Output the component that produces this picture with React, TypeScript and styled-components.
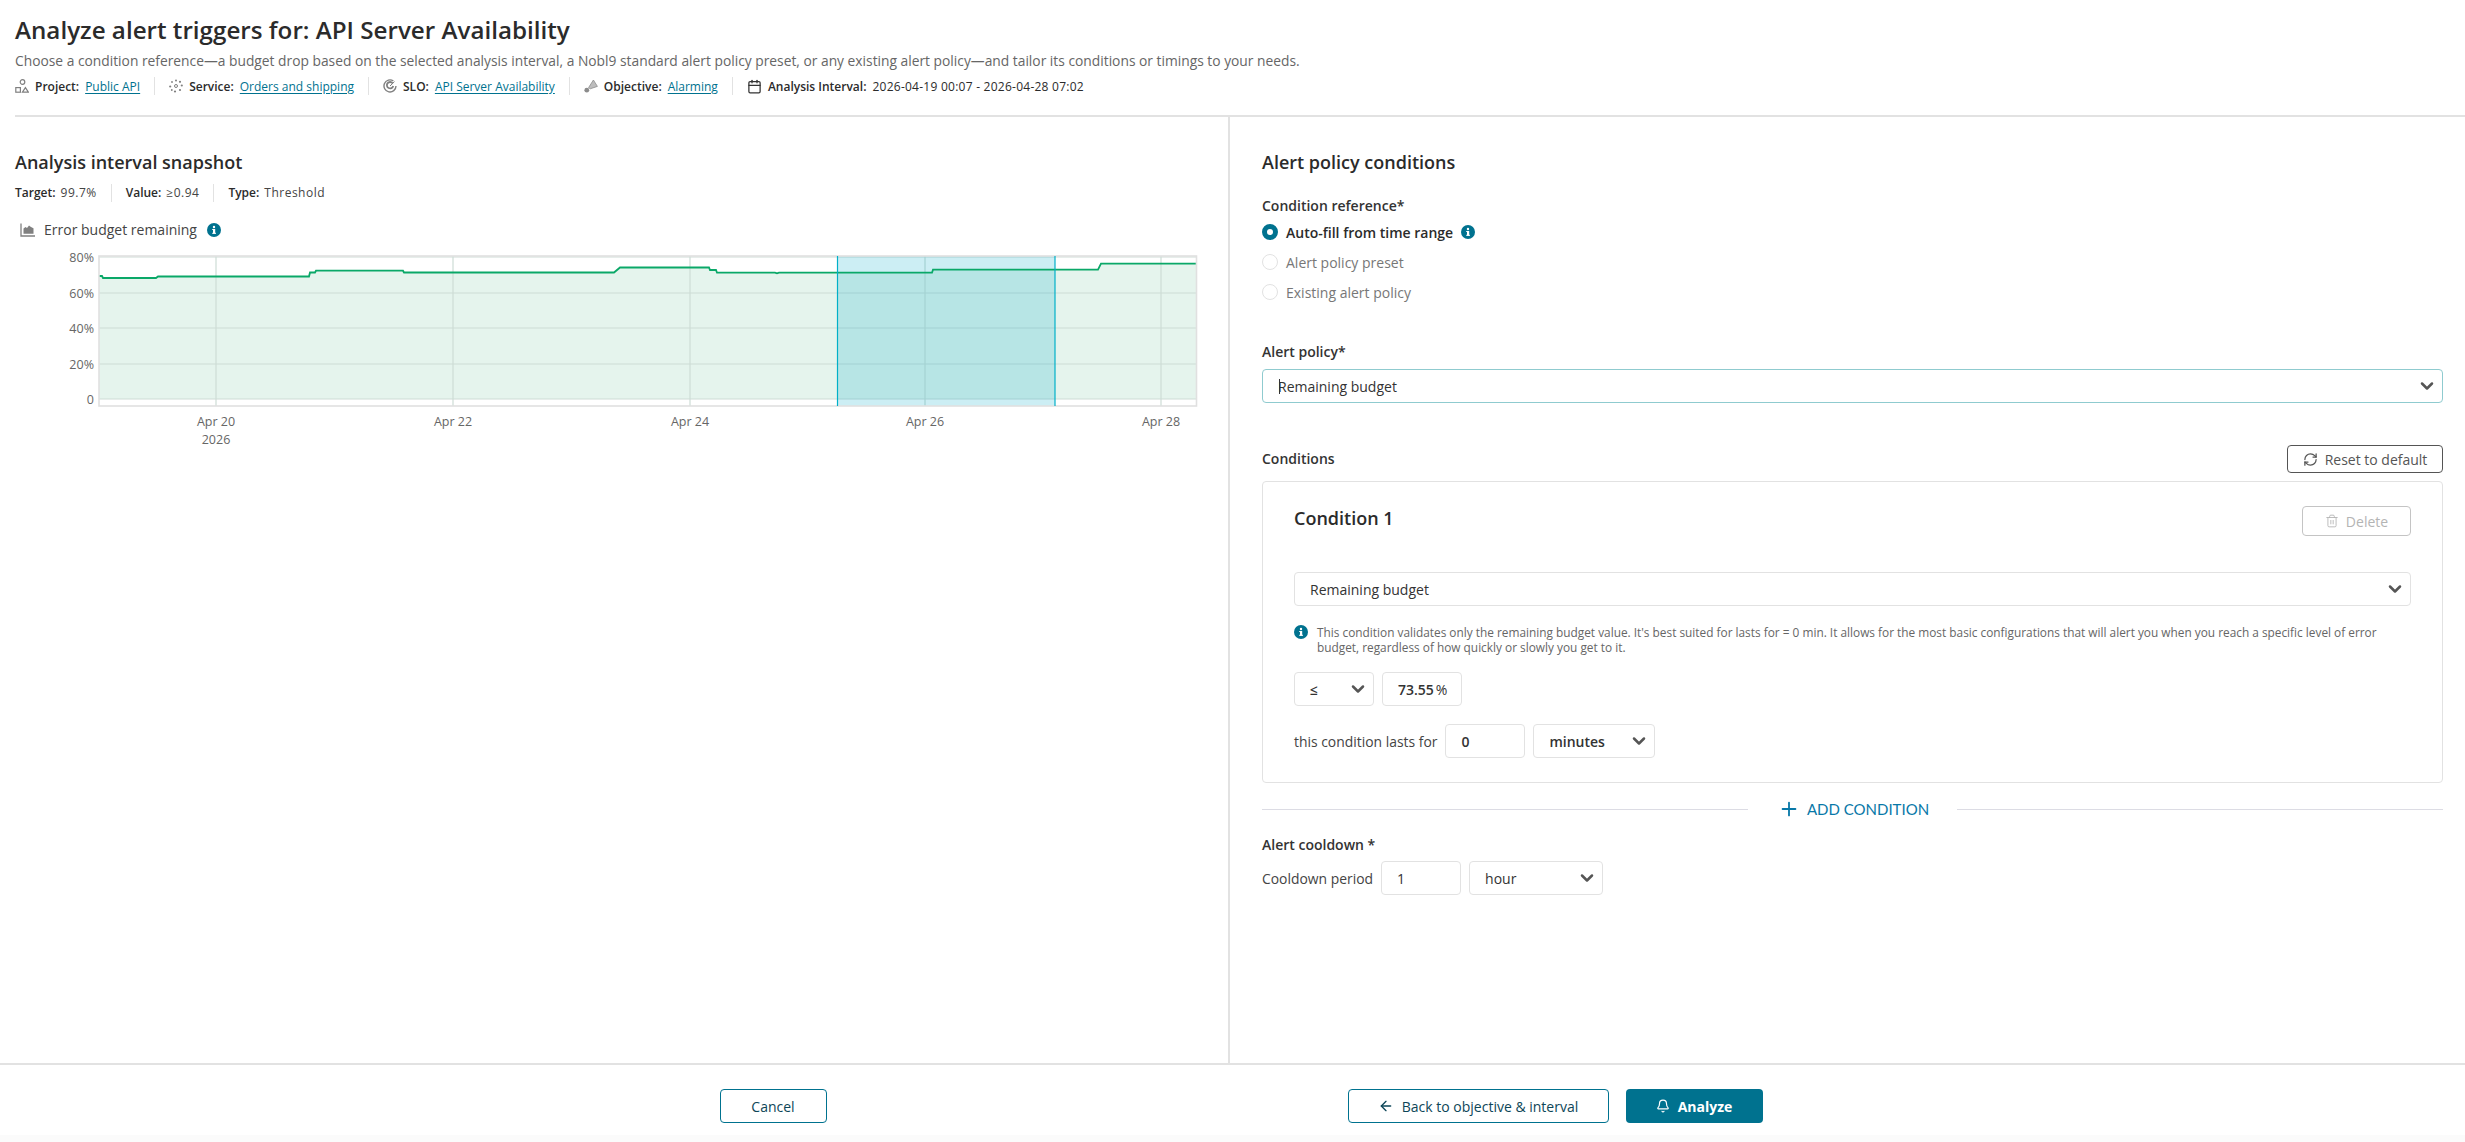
import React from 'react';
import styled, {createGlobalStyle} from 'styled-components';
import {ArrowLeft, Bell, Calendar, ChevronDown, Plus, RefreshCw, Trash2} from 'lucide-react';

const ink = '#2b2b2b';
const teal = '#00728f';
const line = '#e2e2e2';

const GlobalStyle = createGlobalStyle`
	html, body {
		margin: 0;
		padding: 0;
		background: #fff;
	}
	body {
		font-family: "Open Sans", "Noto Sans", "Liberation Sans", sans-serif;
		color: ${ink};
	}
	* {
		box-sizing: border-box;
	}
`;

const ProjectIcon = () => (
	<svg width="14" height="14" viewBox="0 0 14 14" fill="none" stroke="#808080" strokeWidth="1.2">
		<circle cx="7.5" cy="3" r="2.3" />
		<rect x="0.8" y="8.6" width="4.6" height="4.6" />
		<path d="M10.4 8.6 L13.4 13.2 L7.4 13.2 Z" />
	</svg>
);

const ServiceIcon = () => (
	<svg width="14" height="14" viewBox="0 0 14 14" fill="#808080">
		<circle cx="7" cy="7" r="1.5" fill="none" stroke="#808080" />
		<circle cx="7" cy="1.5" r="1" />
		<circle cx="6" cy="12.5" r="1.1" />
		<circle cx="1.2" cy="7.5" r="1.1" />
		<circle cx="12.8" cy="6.5" r="1.1" />
		<circle cx="3" cy="3" r="0.9" />
		<circle cx="11" cy="2.8" r="1.1" />
		<circle cx="2.8" cy="11" r="0.9" />
		<circle cx="11" cy="11" r="1.1" />
	</svg>
);

const SloIcon = () => (
	<svg width="14" height="14" viewBox="0 0 14 14" fill="none" stroke="#808080" strokeWidth="1.4">
		<path d="M10.4 2 A6 6 0 1 0 13 7" />
		<path d="M9.6 4.2 A3.2 3.2 0 1 0 10.2 7" strokeWidth="1.8" />
		<path d="M7 7 L11.5 2.6" strokeWidth="1" />
	</svg>
);

const ObjectiveIcon = () => (
	<svg width="14" height="14" viewBox="0 0 14 14" fill="#8c8c8c">
		<circle cx="2.8" cy="11.2" r="2.4" />
		<path d="M4.6 8.6 L9.4 1 L13.4 7.4 L6.2 9.8 Z" fill="#bdbdbd" stroke="#8c8c8c" strokeWidth="0.8" />
	</svg>
);

const ChartIcon = () => (
	<svg width="16" height="14" viewBox="0 0 16 14" fill="#808080">
		<path d="M1 0.5v12.5h14" fill="none" stroke="#808080" strokeWidth="1.3" />
		<path d="M3.5 10.8V5.5l2-1.6 1.5 1.2 2-2.6 2 1.6 2.5 1.2v5.5z" />
	</svg>
);

const InfoDot = () => (
	<InfoSvg width="14" height="14" viewBox="0 0 14 14">
		<circle cx="7" cy="7" r="7" fill={teal} />
		<rect x="6" y="6" width="2.2" height="4.6" fill="#fff" />
		<rect x="5.2" y="6" width="2" height="1" fill="#fff" />
		<rect x="5.2" y="9.8" width="3.8" height="1" fill="#fff" />
		<circle cx="7" cy="4" r="1.2" fill="#fff" />
	</InfoSvg>
);

const Chevron = () => <ChevronDown size={20} strokeWidth={3} color="#555" />;

const plot = {left: 99, right: 1196.5, top: 257, bottom: 407};
const gridY = [258, 294, 329, 365, 400];
const gridX = [216, 453, 690, 925, 1161];
const yLabels = ['80%', '60%', '40%', '20%', '0'];
const xLabels = ['Apr 20', 'Apr 22', 'Apr 24', 'Apr 26', 'Apr 28'];
const series = 'M99 277 L102 277 L103 279 L156 279 L158 277.5 L309 277.5 L310 273.5 L315 273.5 L316 271.7 L403 271.7 L404 273.5 L614 273.5 L620 268.5 L709 268.5 L710 271 L716 271 L717 273.7 L775 273.7 L777 274.4 L779 273.7 L932 273.7 L933 270.7 L1098 270.7 L1101 264.7 L1196.5 264.7';

const BudgetChart = () => (
	<ChartFrame viewBox="60 250 1140 210" width="1140" height="210">
		<path d={`${series} L1196.5 400 L99 400 Z`} fill="#e5f4ed" />
		{gridY.map((y) => (
			<line key={y} x1={plot.left} x2={plot.right} y1={y} y2={y} stroke="#cddcd6" strokeWidth="1.2" />
		))}
		{gridX.map((x) => (
			<line key={x} x1={x} x2={x} y1={plot.top} y2={407} stroke="#cddcd6" strokeWidth="1.2" />
		))}
		<rect x="837.5" y={plot.top} width="217.5" height={plot.bottom - plot.top} fill="#00acc8" fillOpacity="0.2" />
		<path d={series} fill="none" stroke="#0aa868" strokeWidth="1.8" />
		<rect x={plot.left} y={plot.top} width={plot.right - plot.left} height={plot.bottom - plot.top} fill="none" stroke="#e0e0e0" strokeWidth="1.6" />
		<line x1="837.5" x2="837.5" y1={plot.top} y2={plot.bottom} stroke="#00b0c8" strokeWidth="1.2" />
		<line x1="1055" x2="1055" y1={plot.top} y2={plot.bottom} stroke="#00b0c8" strokeWidth="1.2" />
		{yLabels.map((t, i) => (
			<AxisText key={t} x="94" y={gridY[i] + 5} textAnchor="end">{t}</AxisText>
		))}
		{xLabels.map((t, i) => (
			<AxisText key={t} x={gridX[i]} y="427" textAnchor="middle">{t}</AxisText>
		))}
		<AxisText x="216" y="445" textAnchor="middle">2026</AxisText>
	</ChartFrame>
);

const App = () => {
	return (
		<>
			<GlobalStyle />
			<Page>
				<Header>
					<Title>Analyze alert triggers for: API Server Availability</Title>
					<Subtitle>Choose a condition reference—a budget drop based on the selected analysis interval, a Nobl9 standard alert policy preset, or any existing alert policy—and tailor its conditions or timings to your needs.</Subtitle>
					<MetaRow>
						<MetaItem><ProjectIcon /><b>Project:</b><MetaLink>Public API</MetaLink></MetaItem>
						<MetaItem><ServiceIcon /><b>Service:</b><MetaLink>Orders and shipping</MetaLink></MetaItem>
						<MetaItem><SloIcon /><b>SLO:</b><MetaLink>API Server Availability</MetaLink></MetaItem>
						<MetaItem><ObjectiveIcon /><b>Objective:</b><MetaLink>Alarming</MetaLink></MetaItem>
						<MetaItem><Calendar size={15} color="#333" /><b>Analysis Interval:</b><IntervalText>2026-04-19 00:07 - 2026-04-28 07:02</IntervalText></MetaItem>
					</MetaRow>
				</Header>
				<Main>
					<LeftPane>
						<PaneTitle>Analysis interval snapshot</PaneTitle>
						<StatRow>
							<Stat><b>Target:</b><span>99.7%</span></Stat>
							<Stat><b>Value:</b><span>≥0.94</span></Stat>
							<Stat><b>Type:</b><span>Threshold</span></Stat>
						</StatRow>
						<ChartTitle><ChartIcon />Error budget remaining<InfoDot /></ChartTitle>
						<BudgetChart />
					</LeftPane>
					<RightPane>
						<PaneTitle>Alert policy conditions</PaneTitle>
						<RadioGroup>
							<FieldLabel>Condition reference*</FieldLabel>
							<RadioRow $active><RadioMark $active />Auto-fill from time range<InfoDot /></RadioRow>
							<RadioRow><RadioMark />Alert policy preset</RadioRow>
							<RadioRow><RadioMark />Existing alert policy</RadioRow>
						</RadioGroup>
						<PolicyField>
							<FieldLabel>Alert policy*</FieldLabel>
							<Control $focused $width="100%">
								<Caret />Remaining budget
								<Chevron />
							</Control>
						</PolicyField>
						<ConditionsHead>
							<FieldLabel>Conditions</FieldLabel>
							<ResetButton><RefreshCw size={15} />Reset to default</ResetButton>
						</ConditionsHead>
						<Card>
							<CardHead>
								<CardTitle>Condition 1</CardTitle>
								<DeleteButton><Trash2 size={14} strokeWidth={1.5} />Delete</DeleteButton>
							</CardHead>
							<Control $width="100%">
								Remaining budget
								<Chevron />
							</Control>
							<Hint>
								<InfoDot />
								<HintText>This condition validates only the remaining budget value. It's best suited for lasts for = 0 min. It allows for the most basic configurations that will alert you when you reach a specific level of error budget, regardless of how quickly or slowly you get to it.</HintText>
							</Hint>
							<ValueRow>
								<Control $width="80px" $strong>≤<Chevron /></Control>
								<Control $width="80px" $strong><span>73.55<Percent>%</Percent></span></Control>
							</ValueRow>
							<LastsRow>
								<RowLabel>this condition lasts for</RowLabel>
								<Control $width="80px" $strong>0</Control>
								<Control $width="122px" $strong>minutes<Chevron /></Control>
							</LastsRow>
						</Card>
						<AddRow>
							<AddLabel><Plus size={22} strokeWidth={2} />ADD CONDITION</AddLabel>
						</AddRow>
						<CooldownLabel>Alert cooldown *</CooldownLabel>
						<CooldownRow>
							<RowLabel>Cooldown period</RowLabel>
							<Control $width="80px">1</Control>
							<Control $width="134px">hour<Chevron /></Control>
						</CooldownRow>
					</RightPane>
				</Main>
				<Footer>
					<FooterInner>
						<OutlineButton $width="107px">Cancel</OutlineButton>
						<FooterRight>
							<OutlineButton $width="261px"><ArrowLeft size={16} />Back to objective &amp; interval</OutlineButton>
							<PrimaryButton><Bell size={14} />Analyze</PrimaryButton>
						</FooterRight>
					</FooterInner>
				</Footer>
			</Page>
		</>
	);
};

export default App;

const Page = styled.div`
	display: flex;
	flex-direction: column;
	width: 100%;
	height: 100vh;
	overflow: hidden;
`;

const InfoSvg = styled.svg`
	flex-shrink: 0;
`;

const Header = styled.header`
	display: flex;
	flex-direction: column;
	height: 117px;
	margin-left: 15px;
	padding-top: 14px;
	border-bottom: 2px solid ${line};
`;

const Title = styled.h1`
	margin: 0;
	font-size: 24.2px;
	line-height: 32px;
	font-weight: 600;
	color: ${ink};
`;

const Subtitle = styled.p`
	margin: 6px 0 0;
	font-size: 13.8px;
	line-height: 18px;
	color: #666;
`;

const MetaRow = styled.div`
	display: flex;
	align-items: center;
	margin-top: 7px;
	font-size: 12px;
`;

const MetaItem = styled.div`
	display: flex;
	align-items: center;
	gap: 6px;
	height: 18px;
	padding: 0 14px;
	border-right: 1px solid ${line};
	&:first-child {
		padding-left: 0;
	}
	&:last-child {
		border-right: 0;
	}
	b {
		font-weight: 600;
	}
`;

const MetaLink = styled.a`
	color: ${teal};
	text-decoration: underline;
	text-underline-offset: 2px;
`;

const IntervalText = styled.span`
	letter-spacing: 0.25px;
`;

const Main = styled.main`
	display: flex;
	flex: 1;
	min-height: 0;
`;

const LeftPane = styled.section`
	width: 1230px;
	padding: 33px 0 0 15px;
	border-right: 2px solid ${line};
`;

const RightPane = styled.section`
	flex: 1;
	padding: 33px 22px 0 32px;
	font-size: 14px;
`;

const PaneTitle = styled.h2`
	margin: 0;
	font-size: 18px;
	line-height: 24px;
	font-weight: 600;
`;

const StatRow = styled.div`
	display: flex;
	margin-top: 10px;
	font-size: 12px;
	line-height: 18px;
`;

const Stat = styled.div`
	display: flex;
	gap: 5px;
	padding: 0 14px;
	border-right: 1px solid ${line};
	&:first-child {
		padding-left: 0;
	}
	&:last-child {
		border-right: 0;
	}
	b {
		font-weight: 600;
	}
	span {
		letter-spacing: 0.5px;
		color: #444;
	}
`;

const ChartTitle = styled.div`
	display: flex;
	align-items: center;
	gap: 8px;
	margin: 18px 0 0 5px;
	font-size: 14px;
	line-height: 20px;
	color: #444;
	svg:last-child {
		margin-left: 2px;
	}
`;

const ChartFrame = styled.svg`
	display: block;
	margin: 9px 0 0 45px;
`;

const AxisText = styled.text`
	font-family: "Open Sans", "Noto Sans", sans-serif;
	font-size: 12.5px;
	fill: #666;
`;

const FieldLabel = styled.div`
	font-size: 14px;
	line-height: 20px;
	font-weight: 600;
	color: #333;
`;

const CooldownLabel = styled(FieldLabel)`
	margin-top: 14px;
`;

const RadioGroup = styled.div`
	display: flex;
	flex-direction: column;
	margin-top: 22px;
`;

const RadioRow = styled.div<{$active?: boolean}>`
	display: flex;
	align-items: center;
	gap: 8px;
	height: 30px;
	font-weight: ${(p) => (p.$active ? 600 : 400)};
	color: ${(p) => (p.$active ? ink : '#777')};
	&:nth-child(2) {
		margin-top: 1px;
	}
`;

const RadioMark = styled.span<{$active?: boolean}>`
	width: 16px;
	height: 16px;
	border-radius: 50%;
	border: ${(p) => (p.$active ? `5px solid ${teal}` : `1px solid ${line}`)};
	background: #fff;
`;

const PolicyField = styled.div`
	margin-top: 35px;
	display: flex;
	flex-direction: column;
	gap: 7px;
`;

const Control = styled.div<{$width: string; $focused?: boolean; $strong?: boolean}>`
	display: flex;
	align-items: center;
	justify-content: space-between;
	flex-shrink: 0;
	width: ${(p) => p.$width};
	height: 34px;
	padding: 0 5px 0 15px;
	background: #fff;
	border: 1px solid ${(p) => (p.$focused ? '#8fcbcf' : line)};
	border-radius: 4px;
	font-size: 14px;
	font-weight: ${(p) => (p.$strong ? 600 : 400)};
	color: #333;
`;

const Caret = styled.span`
	position: absolute;
	width: 1px;
	height: 15px;
	margin-left: 1px;
	background: #333;
`;

const Percent = styled.span`
	margin-left: 2px;
	font-weight: 400;
`;

const ConditionsHead = styled.div`
	display: flex;
	align-items: center;
	justify-content: space-between;
	margin-top: 42px;
`;

const ResetButton = styled.button`
	display: flex;
	align-items: center;
	justify-content: center;
	gap: 7px;
	width: 156px;
	height: 28px;
	padding: 0;
	background: #fff;
	border: 1px solid #555;
	border-radius: 4px;
	font: inherit;
	font-size: 14px;
	color: #555;
`;

const Card = styled.div`
	display: flex;
	flex-direction: column;
	height: 302px;
	margin-top: 8px;
	padding: 24px 31px 0;
	border: 1px solid ${line};
	border-radius: 4px;
`;

const CardHead = styled.div`
	display: flex;
	align-items: flex-start;
	justify-content: space-between;
	height: 66px;
`;

const CardTitle = styled.h3`
	margin: 0;
	font-size: 18px;
	line-height: 24px;
	font-weight: 600;
`;

const DeleteButton = styled.button`
	display: flex;
	align-items: center;
	justify-content: center;
	gap: 7px;
	width: 109px;
	height: 30px;
	padding: 0;
	background: #fff;
	border: 1px solid #c4c4c4;
	border-radius: 4px;
	font: inherit;
	font-size: 14px;
	color: #b4b4b4;
`;

const Hint = styled.div`
	display: flex;
	gap: 9px;
	margin-top: 19px;
`;

const HintText = styled.p`
	margin: 0;
	font-size: 11.85px;
	line-height: 15px;
	color: #666;
`;

const ValueRow = styled.div`
	display: flex;
	gap: 8px;
	margin-top: 17px;
`;

const LastsRow = styled.div`
	display: flex;
	align-items: center;
	gap: 8px;
	margin-top: 18px;
	color: #444;
`;

const RowLabel = styled.span`
	font-size: 13.9px;
`;

const AddRow = styled.div`
	display: flex;
	justify-content: center;
	align-items: center;
	height: 24px;
	margin-top: 14px;
	&::before,
	&::after {
		content: '';
		flex: 1;
		height: 1px;
		background: #dcdce4;
	}
`;

const AddLabel = styled.div`
	display: flex;
	align-items: center;
	gap: 7px;
	padding: 0 28px 0 30px;
	font-family: "Lato", sans-serif;
	font-size: 15px;
	color: #0878a8;
`;

const CooldownRow = styled.div`
	display: flex;
	align-items: center;
	gap: 8px;
	margin-top: 6px;
	color: #444;
`;

const Footer = styled.footer`
	display: flex;
	justify-content: center;
	height: 79px;
	padding-top: 24px;
	border-top: 2px solid ${line};
	background: linear-gradient(#fff 70px, #fbfbfb 70px);
`;

const FooterInner = styled.div`
	display: flex;
	justify-content: space-between;
	width: 1043px;
	margin-left: 17px;
`;

const FooterRight = styled.div`
	display: flex;
	gap: 17px;
`;

const OutlineButton = styled.button<{$width: string}>`
	display: flex;
	align-items: center;
	justify-content: center;
	gap: 8px;
	width: ${(p) => p.$width};
	height: 34px;
	padding: 0;
	background: #fff;
	border: 1px solid ${teal};
	border-radius: 4px;
	font: inherit;
	font-size: 14px;
	font-weight: 500;
	color: #0d4658;
`;

const PrimaryButton = styled.button`
	display: flex;
	align-items: center;
	justify-content: center;
	gap: 8px;
	width: 137px;
	height: 34px;
	padding: 0;
	background: ${teal};
	border: 0;
	border-radius: 4px;
	font: inherit;
	font-size: 14px;
	font-weight: 700;
	color: #fff;
`;
